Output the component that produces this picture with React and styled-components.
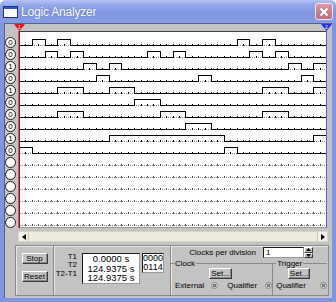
import React from "react";
import styled, { createGlobalStyle } from "styled-components";

const GlobalStyle = createGlobalStyle`
  html, body { margin: 0; padding: 0; background: #ffffff; }
  body { font-family: "Liberation Sans", Arial, sans-serif; }
  * { box-sizing: border-box; }
`;

// clock grid of the trace: 24 periods over the visible span
const UNIT = 12.8;
const LAST = 24;
const ROW_H = 12;
const BASE0 = 14;
const tx = (n) => Math.round(1 + n * UNIT) + 0.5;

const SIGNALS = [
  [[1, 2], [3, 4], [17, 18], [19, 20]],
  [[2, 3], [4, 5], [10, 11], [12, 13], [18, 19], [20, 21]],
  [[5, 6], [7, 8], [21, 22], [23, 24]],
  [[6, 7], [14, 15], [22, 23]],
  [[3, 5], [7, 9], [19, 21], [23, 24]],
  [[9, 11]],
  [[3, 5], [11, 13], [19, 21]],
  [[13, 15]],
  [[7, 16], [23, 24]],
  [[0, 1], [16, 17]],
];
const BITS = ["0", "0", "1", "0", "1", "0", "0", "0", "1", "0", "", "", "", "", "", ""];

const wavePath = (pulses, base, high) => {
  let d = `M${tx(0)} ${base}`;
  pulses.forEach(([a, b]) => {
    d += ` H${tx(a)} V${high} H${tx(b)}`;
    if (b < LAST) d += ` V${base}`;
  });
  if (pulses[pulses.length - 1][1] < LAST) d += ` H${tx(LAST)}`;
  return d;
};

const tickPath = (base) => {
  let d = "";
  for (let k = 0; k <= LAST * 2; k++) {
    const x = Math.round(1 + k * (UNIT / 2));
    d += `M${x} ${base - 1}h1v2h-1z`;
  }
  return d;
};

const Window = styled.div`
  width: 336px;
  height: 302px;
  background: #7f95e0;
  border-radius: 6px 6px 0 0;
  padding: 0 4px 4px;
  display: flex;
  flex-direction: column;
  overflow: hidden;
`;

const TitleBar = styled.div`
  height: 23px;
  margin: 0 -4px;
  padding: 0 3px 0 3px;
  display: flex;
  align-items: center;
  background: linear-gradient(180deg, #b6c4f4 0%, #93a8ea 22%, #7f95e0 55%, #889de4 100%);
`;

const TitleText = styled.span`
  flex: 1;
  margin-left: 3px;
  color: #ffffff;
  font-size: 12px;
  letter-spacing: -0.2px;
  text-shadow: 0 0 1px rgba(40, 60, 140, 0.5);
`;

const CloseButton = styled.div`
  width: 18px;
  height: 17px;
  border-radius: 3px;
  border: 1px solid #f2e4ea;
  background: linear-gradient(180deg, #d89ba8 0%, #c67c8c 60%, #bd6f80 100%);
  display: flex;
  align-items: center;
  justify-content: center;
`;

const Client = styled.div`
  flex: 1;
  background: #c3c3c3;
  border-top: 1px solid #55628f;
  border-left: 1px solid #55628f;
  display: flex;
  flex-direction: column;
`;

const CursorStrip = styled.div`
  height: 7px;
  padding: 0 0 0 9px;
  display: flex;
  justify-content: space-between;
  align-items: flex-end;
`;

const TraceRow = styled.div`
  height: 197px;
  display: flex;
`;

const ChannelColumn = styled.div`
  width: 13px;
  padding-top: 5px;
  display: flex;
  flex-direction: column;
`;

const ChannelSlot = styled.div`
  height: 12px;
  display: flex;
  align-items: center;
`;

const Bit = styled.div`
  width: 11px;
  height: 11px;
  border-radius: 50%;
  background: #ffffff;
  border: 1px solid #1a1a1a;
  font-size: 8px;
  line-height: 9px;
  text-align: center;
  color: #000;
`;

const WaveSvg = styled.svg`
  display: block;
  flex: none;
`;

const ScrollRow = styled.div`
  height: 11px;
  margin: 3px 0 3px 13px;
  width: 310px;
  display: flex;
  background: #efecdf;
  border: 1px solid #d8d4c4;
`;

const ScrollButton = styled.div`
  width: 10px;
  height: 100%;
  background: #f4f2ea;
  border-right: ${(p) => (p.$side === "left" ? "1px solid #cfcab8" : "none")};
  border-left: ${(p) => (p.$side === "right" ? "1px solid #cfcab8" : "none")};
  display: flex;
  align-items: center;
  justify-content: center;
`;

const ScrollTrack = styled.div`
  flex: 1;
`;

const Panel = styled.div`
  height: 51px;
  width: 314px;
  margin-left: 10px;
  border: 1px solid #8a8a8a;
  box-shadow: inset 1px 1px 0 #e8e8e8;
  display: flex;
  font-size: 8px;
  color: #000;
`;

const Section = styled.div`
  width: ${(p) => p.$w}px;
  flex: ${(p) => (p.$w ? "none" : 1)};
  border-right: ${(p) => (p.$divider ? "1px solid #8a8a8a" : "none")};
  box-shadow: ${(p) => (p.$divider ? "1px 0 0 #e8e8e8" : "none")};
`;

const ButtonStack = styled.div`
  height: 100%;
  display: flex;
  flex-direction: column;
  align-items: center;
  padding-top: 7px;
  gap: 7px;
`;

const WinButton = styled.div`
  width: ${(p) => p.$w}px;
  height: 11px;
  background: #c3c3c3;
  border: 1px solid;
  border-color: #ffffff #3a3a3a #3a3a3a #ffffff;
  box-shadow: inset -1px -1px 0 #8a8a8a;
  font-size: 8px;
  line-height: 9px;
  text-align: center;
`;

const TimeBlock = styled.div`
  display: flex;
  padding-top: 7px;
`;

const TimeLabels = styled.div`
  width: 23px;
  display: flex;
  flex-direction: column;
  align-items: flex-end;
  line-height: 8.4px;
`;

const ValueBox = styled.div`
  width: ${(p) => p.$w}px;
  height: ${(p) => p.$h}px;
  margin-left: ${(p) => p.$ml}px;
  background: #ffffff;
  border: 1px solid;
  border-color: #1a1a1a #9a9a9a #9a9a9a #1a1a1a;
  font-size: ${(p) => p.$fs}px;
  line-height: ${(p) => p.$lh}px;
  text-align: center;
  white-space: nowrap;
`;

const ClockTop = styled.div`
  height: 11px;
  margin-top: 1px;
  padding-right: 16px;
  display: flex;
  justify-content: flex-end;
  align-items: center;
`;

const SpinInput = styled.div`
  width: 41px;
  height: 11px;
  margin-left: 7px;
  background: #ffffff;
  border: 1px solid;
  border-color: #1a1a1a #9a9a9a #9a9a9a #1a1a1a;
  font-size: 8px;
  line-height: 9px;
  padding-left: 2px;
`;

const Spinner = styled.div`
  width: 9px;
  height: 11px;
  display: flex;
  flex-direction: column;
`;

const SpinHalf = styled.div`
  flex: 1;
  background: #c3c3c3;
  border: 1px solid;
  border-color: #ffffff #3a3a3a #3a3a3a #ffffff;
  display: flex;
  align-items: center;
  justify-content: center;
`;

const Groups = styled.div`
  display: flex;
  margin-top: 1px;
`;

const Group = styled.fieldset`
  margin: 0;
  padding: 0;
  width: ${(p) => (p.$w ? `${p.$w}px` : "auto")};
  flex: ${(p) => (p.$w ? "none" : 1)};
  height: 36px;
  border: none;
  border-top: 1px solid #8a8a8a;
  border-right: ${(p) => (p.$edge ? "1px solid #8a8a8a" : "none")};
  margin-right: ${(p) => (p.$edge ? 0 : 2)}px;
`;

const Legend = styled.legend`
  margin-left: ${(p) => p.$ml}px;
  padding: 0 1px;
  font-size: 8px;
  line-height: 9px;
`;

const GroupBody = styled.div`
  display: flex;
  flex-direction: column;
  align-items: center;
`;

const SetButton = styled(WinButton)`
  margin-left: ${(p) => p.$ml}px;
  align-self: flex-start;
`;

const OptionRow = styled.div`
  display: flex;
  align-items: center;
  align-self: stretch;
  margin-top: 1px;
  padding-left: ${(p) => p.$pl}px;
  height: 10px;
`;

const OptionText = styled.span`
  font-size: 8px;
  margin-left: ${(p) => p.$ml || 0}px;
`;

const Radio = styled.span`
  width: 7px;
  height: 7px;
  margin-left: ${(p) => p.$ml}px;
  border-radius: 50%;
  border: 1px solid #8a8a8a;
  background: radial-gradient(circle, #7a7a7a 0 1.5px, #d4d4d4 2px);
`;

const Marker = ({ color, label }) => (
  <svg width="11" height="7" viewBox="0 0 11 7">
    <path d="M0 0 H11 L5.5 7 Z" fill={color} />
    <text x="5.5" y="5" fontSize="5" fill="#fff" textAnchor="middle" fontFamily="Liberation Sans">
      {label}
    </text>
  </svg>
);

const Trace = () => (
  <WaveSvg width="310" height="197" viewBox="0 0 310 197" shapeRendering="crispEdges">
    <rect x="0" y="0" width="310" height="197" fill="#ffffff" />
    {BITS.map((_, i) => {
      const base = BASE0 + i * ROW_H;
      const sig = SIGNALS[i];
      return (
        <g key={i}>
          <line x1="2" x2="308" y1={base + 0.5} y2={base + 0.5} stroke="#8a8a8a" strokeDasharray="1 1" />
          <path d={tickPath(base)} fill={sig ? "#000" : "#555"} />
          {sig && (
            <path d={wavePath(sig, base + 0.5, base - 5.5)} fill="none" stroke="#000" strokeWidth="1" />
          )}
        </g>
      );
    })}
    <rect x="0" y="0" width="310" height="1" fill="#404040" />
    <rect x="0" y="196" width="310" height="1" fill="#9a9a9a" />
    <rect x="0" y="0" width="1" height="197" fill="#7a7a7a" />
    <rect x="1" y="0" width="1" height="197" fill="#c80000" />
    <rect x="308" y="0" width="1" height="197" fill="#5b5bf0" />
    <rect x="309" y="0" width="1" height="197" fill="#c3c3c3" />
  </WaveSvg>
);

export default function App() {
  return (
    <>
      <GlobalStyle />
      <Window>
        <TitleBar>
          <svg width="15" height="12" viewBox="0 0 15 12">
            <rect x="0.5" y="0.5" width="14" height="11" fill="#ffffff" stroke="#1d2f78" />
            <rect x="1" y="1" width="13" height="2" fill="#2f5bd0" />
          </svg>
          <TitleText>Logic Analyzer</TitleText>
          <CloseButton>
            <svg width="10" height="10" viewBox="0 0 10 10">
              <path d="M1.5 1.5 L8.5 8.5 M8.5 1.5 L1.5 8.5" stroke="#ffffff" strokeWidth="2" />
            </svg>
          </CloseButton>
        </TitleBar>
        <Client>
          <CursorStrip>
            <Marker color="#ee1010" label="1" />
            <Marker color="#1f2ff0" label="2" />
          </CursorStrip>
          <TraceRow>
            <ChannelColumn>
              {BITS.map((b, i) => (
                <ChannelSlot key={i}>
                  <Bit>{b}</Bit>
                </ChannelSlot>
              ))}
            </ChannelColumn>
            <Trace />
          </TraceRow>
          <ScrollRow>
            <ScrollButton $side="left">
              <svg width="4" height="6" viewBox="0 0 4 6">
                <path d="M4 0 V6 L0 3 Z" fill="#000" />
              </svg>
            </ScrollButton>
            <ScrollTrack />
            <ScrollButton $side="right">
              <svg width="4" height="6" viewBox="0 0 4 6">
                <path d="M0 0 V6 L4 3 Z" fill="#000" />
              </svg>
            </ScrollButton>
          </ScrollRow>
          <Panel>
            <Section $w={38} $divider>
              <ButtonStack>
                <WinButton $w={26}>Stop</WinButton>
                <WinButton $w={26}>Reset</WinButton>
              </ButtonStack>
            </Section>
            <Section $w={117} $divider>
              <TimeBlock>
                <TimeLabels>
                  <span>T1</span>
                  <span>T2</span>
                  <span>T2-T1</span>
                </TimeLabels>
                <ValueBox $w={58} $h={31} $ml={5} $fs={9.5} $lh={9.6}>
                  <div>0.0000 s</div>
                  <div>124.9375 s</div>
                  <div>124.9375 s</div>
                </ValueBox>
                <ValueBox $w={22} $h={20} $ml={2} $fs={9} $lh={9}>
                  <div>0000</div>
                  <div>0114</div>
                </ValueBox>
              </TimeBlock>
            </Section>
            <Section>
              <ClockTop>
                <span>Clocks per division</span>
                <SpinInput>1</SpinInput>
                <Spinner>
                  <SpinHalf>
                    <svg width="5" height="3" viewBox="0 0 5 3">
                      <path d="M0 3 H5 L2.5 0 Z" fill="#000" />
                    </svg>
                  </SpinHalf>
                  <SpinHalf>
                    <svg width="5" height="3" viewBox="0 0 5 3">
                      <path d="M0 0 H5 L2.5 3 Z" fill="#000" />
                    </svg>
                  </SpinHalf>
                </Spinner>
              </ClockTop>
              <Groups>
                <Group $w={102} $edge>
                  <Legend $ml={3}>Clock</Legend>
                  <GroupBody>
                    <SetButton $w={23} $ml={38}>Set...</SetButton>
                    <OptionRow $pl={4}>
                      <OptionText>External</OptionText>
                      <Radio $ml={7} />
                      <OptionText $ml={9}>Qualifier</OptionText>
                      <Radio $ml={8} />
                    </OptionRow>
                  </GroupBody>
                </Group>
                <Group>
                  <Legend $ml={3}>Trigger</Legend>
                  <GroupBody>
                    <SetButton $w={22} $ml={15}>Set...</SetButton>
                    <OptionRow $pl={3}>
                      <OptionText>Qualifier</OptionText>
                      <Radio $ml={14} />
                    </OptionRow>
                  </GroupBody>
                </Group>
              </Groups>
            </Section>
          </Panel>
        </Client>
      </Window>
    </>
  );
}
